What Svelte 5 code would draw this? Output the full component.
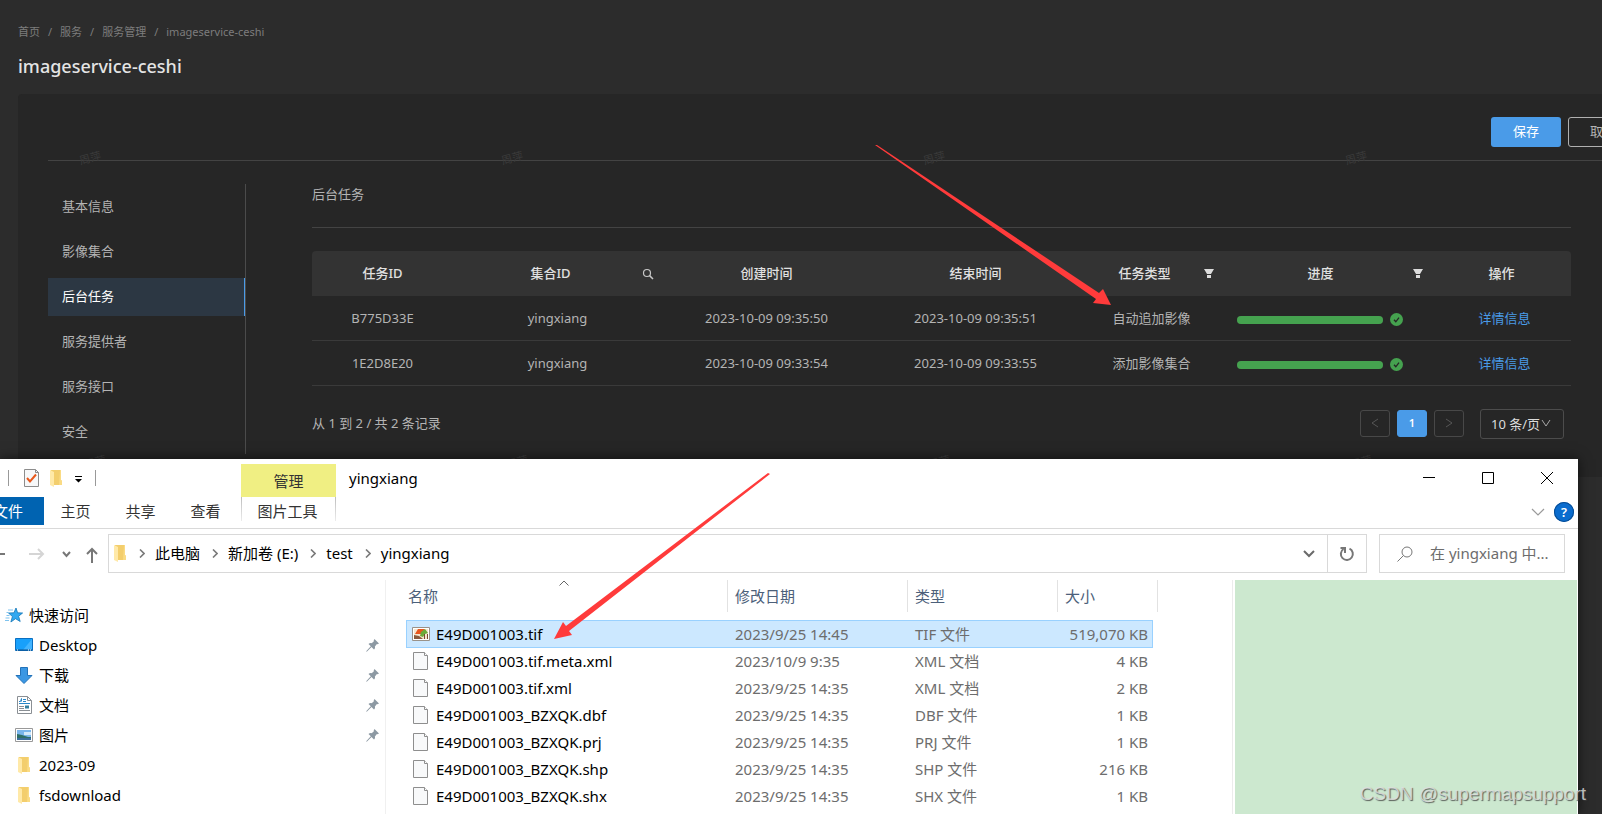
<script>
  const crumbs = ['首页', '服务', '服务管理', 'imageservice-ceshi'];
  const menu = ['基本信息', '影像集合', '后台任务', '服务提供者', '服务接口', '安全'];
  let activeMenu = $state('后台任务');
  let pageSize = $state('10');

  const tasks = [
    { id: 'B775D33E', set: 'yingxiang', start: '2023-10-09 09:35:50', end: '2023-10-09 09:35:51', type: '自动追加影像', progress: 100 },
    { id: '1E2D8E20', set: 'yingxiang', start: '2023-10-09 09:33:54', end: '2023-10-09 09:33:55', type: '添加影像集合', progress: 100 }
  ];

  const path = ['此电脑', '新加卷 (E:)', 'test', 'yingxiang'];

  const places = [
    { name: 'Desktop', icon: 'desktop', pinned: true },
    { name: '下载', icon: 'download', pinned: true },
    { name: '文档', icon: 'document', pinned: true },
    { name: '图片', icon: 'picture', pinned: true },
    { name: '2023-09', icon: 'folder', pinned: false },
    { name: 'fsdownload', icon: 'folder', pinned: false }
  ];

  const files = [
    { name: 'E49D001003.tif', date: '2023/9/25 14:45', type: 'TIF 文件', size: '519,070 KB' },
    { name: 'E49D001003.tif.meta.xml', date: '2023/10/9 9:35', type: 'XML 文档', size: '4 KB' },
    { name: 'E49D001003.tif.xml', date: '2023/9/25 14:35', type: 'XML 文档', size: '2 KB' },
    { name: 'E49D001003_BZXQK.dbf', date: '2023/9/25 14:35', type: 'DBF 文件', size: '1 KB' },
    { name: 'E49D001003_BZXQK.prj', date: '2023/9/25 14:35', type: 'PRJ 文件', size: '1 KB' },
    { name: 'E49D001003_BZXQK.shp', date: '2023/9/25 14:35', type: 'SHP 文件', size: '216 KB' },
    { name: 'E49D001003_BZXQK.shx', date: '2023/9/25 14:35', type: 'SHX 文件', size: '1 KB' }
  ];
  let selected = $state('E49D001003.tif');

  // repeated user name stamp behind the console
  const stamps = [
    { x: 79, y: 149 }, { x: 501, y: 149 }, { x: 923, y: 149 }, { x: 1345, y: 149 },
    { x: 84, y: 453 }, { x: 506, y: 453 }, { x: 928, y: 453 }, { x: 1350, y: 453 }
  ];
</script>

{#snippet folder()}
  <svg class="folder" width="13" height="17" viewBox="0 0 13 17" aria-hidden="true">
    <path d="M1 0h10v10l1 1v4H1z" fill="#f3ce6d" />
    <path d="M0 0l4 2v15l-4-2z" fill="#ffe9a8" />
    <path d="M10 0h1v10l1 1v4h-3z" fill="#fadb84" />
  </svg>
{/snippet}

{#snippet filter()}
  <button class="th-icon" aria-label="筛选">
    <svg width="12" height="12" viewBox="0 0 12 12"><path d="M1 1h10L8 6H4zM4 7h4v3H4z" fill="#dcdcdc" /></svg>
  </button>
{/snippet}

<div class="desktop">
  <div class="console">
    <header class="page-head">
      <nav class="crumbs" aria-label="breadcrumb">
        {#each crumbs as crumb, i}
          {#if i > 0}<span>/</span>{/if}
          <a href="#top">{crumb}</a>
        {/each}
      </nav>
      <h1>imageservice-ceshi</h1>
    </header>

    <section class="panel">
      <div class="actions">
        <button class="save">保存</button>
        <button class="cancel">取消</button>
      </div>

      <div class="panel-body">
        <nav class="side">
          {#each menu as item}
            <a href="#menu" class:active={item === activeMenu} onclick={() => (activeMenu = item)}>{item}</a>
          {/each}
        </nav>

        <div class="main">
          <h2>后台任务</h2>
          <table class="tasks">
            <colgroup>
              <col class="c-id" /><col class="c-wide" /><col class="c-wide" /><col class="c-wide" />
              <col class="c-type" /><col class="c-wide" /><col class="c-op" />
            </colgroup>
            <thead>
              <tr>
                <th>任务ID</th>
                <th>
                  <div class="th-tool">
                    <span>集合ID</span>
                    <button class="th-icon" aria-label="搜索">
                      <svg width="12" height="12" viewBox="0 0 12 12" fill="none" stroke="#c8c8c8">
                        <circle cx="5" cy="5" r="3.5" stroke-width="1.2" />
                        <path d="M7.6 7.6L11 11" stroke-width="1.5" />
                      </svg>
                    </button>
                  </div>
                </th>
                <th>创建时间</th>
                <th>结束时间</th>
                <th><div class="th-tool"><span>任务类型</span>{@render filter()}</div></th>
                <th><div class="th-tool"><span>进度</span>{@render filter()}</div></th>
                <th>操作</th>
              </tr>
            </thead>
            <tbody>
              {#each tasks as task}
                <tr>
                  <td>{task.id}</td>
                  <td>{task.set}</td>
                  <td>{task.start}</td>
                  <td>{task.end}</td>
                  <td>{task.type}</td>
                  <td>
                    <div class="progress">
                      <div class="track"><div class="bar" style="width: {task.progress}%"></div></div>
                      <svg width="13" height="13" viewBox="0 0 13 13" aria-hidden="true">
                        <circle cx="6.5" cy="6.5" r="6.5" fill="#45a24f" />
                        <path d="M4 6.8l1.8 2L9 4.6" fill="none" stroke="#262626" stroke-width="1.3" />
                      </svg>
                    </div>
                  </td>
                  <td><a href="#detail">详情信息</a></td>
                </tr>
              {/each}
            </tbody>
          </table>

          <div class="pager">
            <span class="total">从 1 到 2 / 共 2 条记录</span>
            <button class="page" aria-label="上一页" disabled>
              <svg width="10" height="10" viewBox="0 0 10 10"><path d="M8 1L2 5l6 4" fill="none" stroke="#565656" /></svg>
            </button>
            <button class="page current">1</button>
            <button class="page" aria-label="下一页" disabled>
              <svg width="10" height="10" viewBox="0 0 10 10"><path d="M2 1l6 4-6 4" fill="none" stroke="#565656" /></svg>
            </button>
            <div class="size">
              <select bind:value={pageSize} aria-label="每页条数">
                <option value="10">10 条/页</option>
                <option value="20">20 条/页</option>
              </select>
              <svg width="10" height="10" viewBox="0 0 10 10" aria-hidden="true"><path d="M1 1l4 6 4-6" fill="none" stroke="#a8a8a8" /></svg>
            </div>
          </div>
        </div>
      </div>
    </section>

    {#each stamps as stamp}
      <span class="stamp" style="left: {stamp.x}px; top: {stamp.y}px">周萍</span>
    {/each}
  </div>

  <section class="explorer">
    <div class="titlebar">
      <div class="quick">
        <i class="sep"></i>
        <svg class="q-doc" width="15" height="18" viewBox="0 0 15 18" aria-hidden="true">
          <path d="M.5.5h11l3 3v14H.5z" fill="#f7f8f9" stroke="#8c8c8c" />
          <path d="M11.500.5v3h3" fill="none" stroke="#8c8c8c" />
          <path d="M3 9l3 3.500L12 5.500" fill="none" stroke="#e8581c" stroke-width="2" />
        </svg>
        {@render folder()}
        <svg class="q-caret" width="7" height="7" viewBox="0 0 7 7" aria-hidden="true"><path d="M0 0h7v1H0zM0 3h7L3.500 6.500z" fill="#000" /></svg>
        <i class="sep"></i>
      </div>
      <div class="context">管理</div>
      <div class="title">yingxiang</div>
      <div class="win-buttons">
        <button aria-label="最小化"><svg width="12" height="12" viewBox="0 0 12 12"><path d="M0 5.500h12" stroke="#000" /></svg></button>
        <button aria-label="最大化"><svg width="12" height="12" viewBox="0 0 12 12"><path d="M.5.5h11v11H.5z" fill="none" stroke="#000" /></svg></button>
        <button aria-label="关闭"><svg width="12" height="12" viewBox="0 0 12 12"><path d="M0 0l12 12M12 0L0 12" stroke="#000" /></svg></button>
      </div>
    </div>

    <div class="ribbon">
      <button class="file">文件</button>
      <button>主页</button>
      <button>共享</button>
      <button>查看</button>
      <button class="tools">图片工具</button>
      <div class="ribbon-end">
        <svg width="14" height="8" viewBox="0 0 14 8" aria-hidden="true"><path d="M1 1l6 6 6-6" fill="none" stroke="#9a9a9a" stroke-width="1.2" /></svg>
        <button class="help" aria-label="帮助">?</button>
      </div>
    </div>

    <div class="location">
      <div class="arrows">
        <svg width="98" height="20" viewBox="0 0 98 20" fill="none" aria-hidden="true">
          <path d="M0 10h5" stroke="#777" stroke-width="2" />
          <path d="M29 10h14M38 5l5 5-5 5" stroke="#d5d5d5" stroke-width="2" />
          <path d="M63 8l3.500 4L70 8" stroke="#777" stroke-width="2" />
          <path d="M92 19V5M87 10l5-5 5 5" stroke="#777" stroke-width="2" />
        </svg>
      </div>
      <div class="address">
        {@render folder()}
        {#each path as part}
          <svg class="chev" width="6" height="9" viewBox="0 0 6 9" aria-hidden="true"><path d="M1 .5l4 4-4 4" fill="none" stroke="#7a7a7a" stroke-width="1.600" /></svg>
          <button class="part">{part}</button>
        {/each}
        <button class="drop" aria-label="展开"><svg width="12" height="8" viewBox="0 0 12 8"><path d="M1 1l5 5 5-5" fill="none" stroke="#6a6a6a" stroke-width="2" /></svg></button>
        <button class="reload" aria-label="刷新">
          <svg width="16" height="16" viewBox="0 0 16 16" fill="none" stroke="#777" stroke-width="2"><path d="M10.500 2.600A6 6 0 1 1 4.500 3" /><path d="M1.500 2h4.500v5" /></svg>
        </button>
      </div>
      <label class="search">
        <svg width="16" height="16" viewBox="0 0 16 16" fill="none" stroke="#777"><circle cx="10" cy="6" r="5" /><path d="M6.500 9.500L.5 15.500" /></svg>
        <input type="text" placeholder="在 yingxiang 中..." aria-label="搜索" />
      </label>
    </div>

    <div class="content">
      <nav class="tree">
        <a href="#quick" class="root">
          <svg width="19" height="17" viewBox="0 0 19 17" aria-hidden="true">
            <path d="M11 1l1.600 4.800 5 .2-4 3.200 1.600 5.300-4.700-2.800-4.600 3.300 1.500-5.500L3.500 6l5.400-.2z" fill="#31a8f0" stroke="#1577b8" stroke-width=".8" />
            <path d="M3 3h5M1.500 5.500h2M1.500 8.500h3M.5 11h4M0 13.500h4" stroke="#7fc3ee" />
          </svg>
          <span>快速访问</span>
        </a>
        {#each places as place}
          <a href="#place">
            <i class="place-icon">
              {#if place.icon === 'desktop'}
                <svg width="18" height="14" viewBox="0 0 18 14"><path d="M.5.5h17v12H.5z" fill="#18a0fb" stroke="#0b6fc0" /><path d="M17 1v11H8z" fill="#42b4ff" /><path d="M1 12h16" stroke="#0b4f8a" /><path d="M2 12h1M13 12h1M15 12h1" stroke="#fff" /></svg>
              {:else if place.icon === 'download'}
                <svg width="18" height="17" viewBox="0 0 18 17"><path d="M5.500.5h7v8h4.500L9 16.500 1 8.500h4.500z" fill="#3b97e3" stroke="#2272b9" /></svg>
              {:else if place.icon === 'document'}
                <svg width="15" height="18" viewBox="0 0 15 18"><path d="M.5.5h10l4 4v13H.5z" fill="#fff" stroke="#8a8f94" /><path d="M10.500.5v4h4" fill="none" stroke="#8a8f94" /><path d="M2 5.500h1.500l1-3v3M6 3.500h3M6 5.500h3M2 7.500h11" fill="none" stroke="#2a87c8" /><path d="M2 10.500h5M2 12.500h5M2 14.500h11" stroke="#8a8f94" /><path d="M8 9.500h4v3H8z" fill="#357f9f" /></svg>
              {:else if place.icon === 'picture'}
                <svg width="18" height="14" viewBox="0 0 18 14"><path d="M.5.5h17v13H.5z" fill="#fff" stroke="#999" /><path d="M2 2h14v10H2z" fill="#79b5ec" /><path d="M9 4h7v3H9z" fill="#d3e9fa" /><path d="M2 6l5 1 6 2h3v3H2z" fill="#2f6f67" /><path d="M2 10h14v2H2z" fill="#3c6e9e" /></svg>
              {:else}
                {@render folder()}
              {/if}
            </i>
            <span>{place.name}</span>
            {#if place.pinned}
              <svg class="pin" width="13" height="13" viewBox="0 0 13 13" aria-hidden="true"><path d="M8.500 0L13 4.500l-1.500.8-.6-.2-2 2.300c.3 1.400 0 2.300-.9 3.100L5.500 8 1 12.600l-.8.2.2-.9L4.800 7.300 2.500 5c.9-.9 2-1.100 3.200-.8l2.200-2-.2-.8z" fill="#8d99a3" /></svg>
            {/if}
          </a>
        {/each}
      </nav>

      <div class="list">
        <table class="files">
          <colgroup><col class="f-name" /><col class="f-date" /><col class="f-type" /><col class="f-size" /></colgroup>
          <thead>
            <tr>
              <th>
                名称
                <svg class="sort" width="10" height="6" viewBox="0 0 10 6" aria-hidden="true"><path d="M.5 5.500L5 1l4.500 4.500" fill="none" stroke="#666" /></svg>
              </th>
              <th>修改日期</th>
              <th>类型</th>
              <th>大小</th>
            </tr>
          </thead>
          <tbody>
            {#each files as file, i}
              <tr class:selected={file.name === selected} onclick={() => (selected = file.name)}>
                <td>
                  <div class="file-name">
                    <i class="file-icon">
                      {#if i === 0}
                        <svg width="18" height="14" viewBox="0 0 18 14"><path d="M.5.5h17v13H.5z" fill="#fff" stroke="#9a9288" /><path d="M2 2h14v10H2z" fill="#f4e6cf" /><path d="M2 8l5 1 4 3H2z" fill="#8a5a3c" /><path d="M3 7l3-5h7L9 7z" fill="#e8561e" /><path d="M8 9l1-4 4-3 3 4-3 1-2 3z" fill="#6bab38" /><path d="M12 7h1v5h-1zM15 7h1v5h-1z" fill="#7a4a30" /></svg>
                      {:else}
                        <svg width="15" height="18" viewBox="0 0 15 18"><path d="M.5.5h11l3 3v14H.5z" fill="#f8f9fa" stroke="#8e8e8e" /><path d="M11.500.5v3h3" fill="#fff" stroke="#8e8e8e" /></svg>
                      {/if}
                    </i>
                    {file.name}
                  </div>
                </td>
                <td>{file.date}</td>
                <td>{file.type}</td>
                <td>{file.size}</td>
              </tr>
            {/each}
          </tbody>
        </table>
      </div>

      <aside class="preview"></aside>
    </div>
  </section>

  <svg class="marks" aria-hidden="true">
    <path d="M876 145L1103 289 1111 305 1093 303 1096 299z" fill="none" />
    <path d="M875 145L877 145 1099 293 1103 289 1111 305 1093 303 1096 299z" fill="#ff3b3b" />
    <path d="M768 473L770 474 569 631 572 635 554 639 563 622 566 626z" fill="#ff3b3b" />
  </svg>
  <div class="credit">CSDN @supermapsupport</div>
</div>

<style>
  :global(body) {
    background: #2c2c2c;
  }

  .desktop {
    position: relative;
    display: flex;
    flex-direction: column;
    min-height: 100vh;
    overflow: hidden;
    background: #2c2c2c;
    font-family: 'Noto Sans', 'Noto Sans CJK SC', sans-serif;
    font-size: 13px;
    line-height: 20px;
    color: #b4b4b4;
  }

  button, input, select {
    font: inherit;
    color: inherit;
    padding: 0;
    border: 0;
    background: none;
  }

  a {
    color: inherit;
    text-decoration: none;
  }

  svg {
    display: block;
    flex: none;
  }

  /* console */
  .console {
    position: relative;
  }

  .page-head {
    padding: 22px 0 14px 18px;
  }

  .crumbs {
    display: flex;
    gap: 8px;
    font-size: 11px;
    color: #7d7d7d;
  }

  h1 {
    margin: 10px 0 0;
    font-size: 18px;
    line-height: 28px;
    font-weight: 500;
    color: #e4e4e4;
  }

  .panel {
    margin-left: 18px;
    padding: 0 0 23px 30px;
    background: #262626;
    border-radius: 4px 0 0 0;
  }

  .actions {
    display: flex;
    justify-content: flex-end;
    gap: 7px;
    margin-right: -36px;
    padding: 23px 0 13px;
    border-bottom: 1px solid #434343;
  }

  .actions button {
    width: 70px;
    height: 30px;
    padding-bottom: 2px;
    border-radius: 3px;
  }

  .save {
    background: #4a9be8;
    color: #fff;
  }

  .actions .cancel {
    border: 1px solid #b0b0b0;
  }

  .panel-body {
    display: flex;
    align-items: flex-start;
    margin-top: 23px;
  }

  .side {
    flex: none;
    width: 197px;
    padding: 4px 0 3px;
    border-right: 1px solid #4b4b4b;
  }

  .side a {
    display: block;
    margin: 0 0 7px;
    padding: 0 14px 2px;
    line-height: 36px;
  }

  .side a:last-child {
    margin: 0;
  }

  .side .active {
    background: #2c3743;
    border-right: 1px solid #4a9be8;
    color: #fff;
  }

  .main {
    flex: 1;
    min-width: 0;
    padding: 0 31px 0 66px;
  }

  h2 {
    margin: 0 0 23px;
    padding: 0 0 23px;
    border-bottom: 1px solid #434343;
    font-size: 13px;
    font-weight: 400;
  }

  .tasks {
    width: 100%;
    table-layout: fixed;
    border-collapse: separate;
    border-spacing: 0;
    text-align: center;
  }

  .c-id { width: 141px; }
  .c-wide { width: 209px; }
  .c-type { width: 143px; }
  .c-op { width: 139px; }

  .tasks th {
    height: 43px;
    padding: 0 0 2px;
    background: #333;
    color: #e0e0e0;
    font-weight: 500;
  }

  .tasks th:first-child { border-radius: 4px 0 0 0; }
  .tasks th:last-child { border-radius: 0 4px 0 0; }

  .tasks td {
    height: 44px;
    padding: 0;
    border-bottom: 1px solid #3a3a3a;
  }

  .tasks td a {
    color: #4a9be8;
  }

  .tasks td:last-child {
    padding-left: 6px;
  }

  .th-tool {
    display: flex;
    align-items: center;
    padding: 0 8px 0 6px;
  }

  .th-tool span {
    flex: 1;
  }

  .th-icon {
    width: 12px;
    padding-top: 2px;
  }

  .progress {
    display: flex;
    align-items: center;
    gap: 7px;
    padding: 3px 29px 0 14px;
  }

  .track {
    flex: 1;
    height: 8px;
    border-radius: 4px;
    background: #3a3a3a;
  }

  .bar {
    height: 100%;
    border-radius: 4px;
    background: #45a24f;
  }

  .pager {
    display: flex;
    align-items: center;
    gap: 7px;
    margin-top: 23px;
    padding-right: 7px;
  }

  .total {
    flex: 1;
    padding-bottom: 2px;
  }

  .page {
    display: grid;
    place-items: center;
    width: 30px;
    height: 27px;
    margin-bottom: 2px;
    border: 1px solid #484848;
    border-radius: 3px;
  }

  .page.current {
    border-color: #4a9be8;
    background: #4a9be8;
    color: #fff;
    font-size: 11px;
    font-weight: 600;
  }

  .size {
    display: flex;
    align-items: center;
    margin-left: 9px;
    padding-right: 12px;
    height: 28px;
    border: 1px solid #4c4c4c;
    border-radius: 3px;
    color: #dcdcdc;
  }

  .size select {
    appearance: none;
    width: 60px;
    padding-left: 10px;
    background: transparent;
  }

  .size select option {
    background: #262626;
  }

  .stamp {
    position: absolute;
    font-size: 11px;
    line-height: 17px;
    color: #3a3a3a;
    transform: rotate(-15deg);
  }

  /* file explorer */
  .explorer {
    position: relative;
    display: flex;
    flex-direction: column;
    flex: 1;
    margin: -18px 24px 0 0;
    overflow: hidden;
    background: #fff;
    box-shadow: 0 0 12px rgba(0, 0, 0, 0.6);
    font-size: 15px;
    color: #000;
  }

  .titlebar {
    display: flex;
    height: 38px;
  }

  .quick {
    display: flex;
    align-items: center;
    width: 233px;
    padding-left: 8px;
  }

  .sep {
    width: 1px;
    height: 16px;
    background: #999;
  }

  .q-doc {
    margin: 0 11px 0 15px;
  }

  .q-caret {
    margin: 2px 13px 0 12px;
  }

  .context {
    width: 95px;
    margin-top: 5px;
    background: #f0ef83;
    color: #333;
    line-height: 34px;
    text-align: center;
  }

  .title {
    flex: 1;
    padding-left: 13px;
    line-height: 38px;
  }

  .win-buttons {
    display: flex;
    padding-right: 2px;
  }

  .win-buttons button {
    display: grid;
    place-items: center;
    width: 59px;
  }

  .ribbon {
    display: flex;
    height: 31px;
    border-bottom: 1px solid #d9d9d9;
    color: #333;
  }

  .ribbon button {
    width: 65px;
    height: 28px;
    padding-right: 2px;
  }

  .ribbon .file {
    width: 70px;
    margin-left: -26px;
    background: #0063b1;
    color: #fff;
  }

  .ribbon .tools {
    width: 95px;
    height: 24px;
    margin-left: 2px;
    padding-top: 4px;
    border: 1px solid;
    border-width: 0 1px;
    border-image: linear-gradient(#bbb, #eee) 1;
  }

  .ribbon-end {
    display: flex;
    align-items: center;
    gap: 9px;
    margin-left: auto;
    padding: 0 4px 2px 0;
  }

  .ribbon-end .help {
    width: 20px;
    height: 20px;
    padding: 0;
    border-radius: 50%;
    background: #0a6cce;
    box-shadow: inset 0 0 0 1px #084d94;
    color: #fff;
    font-size: 13px;
    line-height: 20px;
    font-weight: 600;
  }

  .location {
    display: flex;
    padding: 5px 13px 7px 0;
  }

  .arrows {
    display: flex;
    align-items: center;
    width: 108px;
  }

  .address {
    display: flex;
    align-items: center;
    flex: 1;
    height: 37px;
    margin-right: 12px;
    padding-left: 5px;
    border: 1px solid #d9d9d9;
  }

  .chev {
    margin: 0 10px 0 12px;
  }

  .address .part {
    padding-bottom: 2px;
  }

  .address .drop {
    margin: 0 12px 0 auto;
  }

  .address .reload {
    display: grid;
    place-items: center;
    width: 39px;
    height: 37px;
    border-left: 1px solid #d9d9d9;
  }

  .search {
    display: flex;
    align-items: center;
    box-sizing: border-box;
    width: 186px;
    padding-left: 17px;
    border: 1px solid #d9d9d9;
  }

  .search input {
    width: 130px;
    margin-left: 17px;
    padding-bottom: 2px;
    outline: 0;
  }

  .search input::placeholder {
    color: #6d6d6d;
    opacity: 1;
  }

  .content {
    display: flex;
    flex: 1;
  }

  .tree {
    width: 385px;
    padding-top: 20px;
    border-right: 1px solid #f0f0f0;
  }

  .tree a {
    display: flex;
    align-items: center;
    height: 30px;
    padding: 0 6px 0 15px;
  }

  .tree .root {
    gap: 5px;
    padding-left: 5px;
  }

  .place-icon {
    display: grid;
    place-items: center;
    width: 18px;
    margin-right: 6px;
  }

  .pin {
    margin-left: auto;
  }

  .list {
    flex: 1;
    padding-left: 20px;
  }

  .files {
    width: 747px;
    table-layout: fixed;
    border-collapse: separate;
    border-spacing: 0;
  }

  .f-name { width: 322px; }
  .f-date { width: 180px; }
  .f-type { width: 150px; }
  .f-size { width: 95px; }

  .files thead::after {
    content: '';
    display: block;
    height: 8px;
  }

  .files th {
    position: relative;
    height: 32px;
    padding: 0 7px;
    border-right: 1px solid #e2e2e2;
    box-sizing: border-box;
    text-align: left;
    font-weight: 400;
    color: #4c607a;
  }

  .files th:first-child {
    padding-left: 2px;
  }

  .files th:last-child {
    border-right: 0;
  }

  .files th:last-child::after {
    content: '';
    position: absolute;
    top: 0;
    right: -5px;
    height: 32px;
    border-right: 1px solid #e2e2e2;
  }

  .sort {
    position: absolute;
    top: 0;
    left: 153px;
  }

  .files td {
    height: 25px;
    padding: 0 7px 2px;
    color: #6d6d6d;
  }

  .files td:first-child {
    padding-left: 6px;
    color: #000;
  }

  .files td:last-child {
    padding-right: 5px;
    text-align: right;
  }

  .file-name {
    display: flex;
    align-items: center;
  }

  .file-icon {
    display: grid;
    place-items: center;
    width: 16px;
    height: 18px;
    margin-right: 8px;
  }

  .files .selected td {
    height: 26px;
    padding-bottom: 0;
    background: #cce8ff;
    border: 1px solid #99d1ff;
    border-width: 1px 0;
  }

  .files .selected td:first-child {
    border-left-width: 1px;
    padding-left: 5px;
  }

  .files .selected td:last-child {
    border-right-width: 1px;
    padding-right: 4px;
  }

  .preview {
    width: 342px;
    margin: 0 1px 0 0;
    background: #cce8cf;
    box-shadow: -2px 0 #fff, -3px 0 #ececec;
  }

  /* annotations over both windows */
  .marks {
    position: absolute;
    inset: 0;
    width: 100%;
    height: 100%;
    pointer-events: none;
  }

  .credit {
    position: absolute;
    right: 16px;
    bottom: 8px;
    font-family: 'Liberation Sans', sans-serif;
    font-size: 19px;
    line-height: 24px;
    color: rgba(225, 225, 225, 0.8);
    text-shadow: 1px 1px 1px rgba(60, 60, 60, 0.8);
  }
</style>
